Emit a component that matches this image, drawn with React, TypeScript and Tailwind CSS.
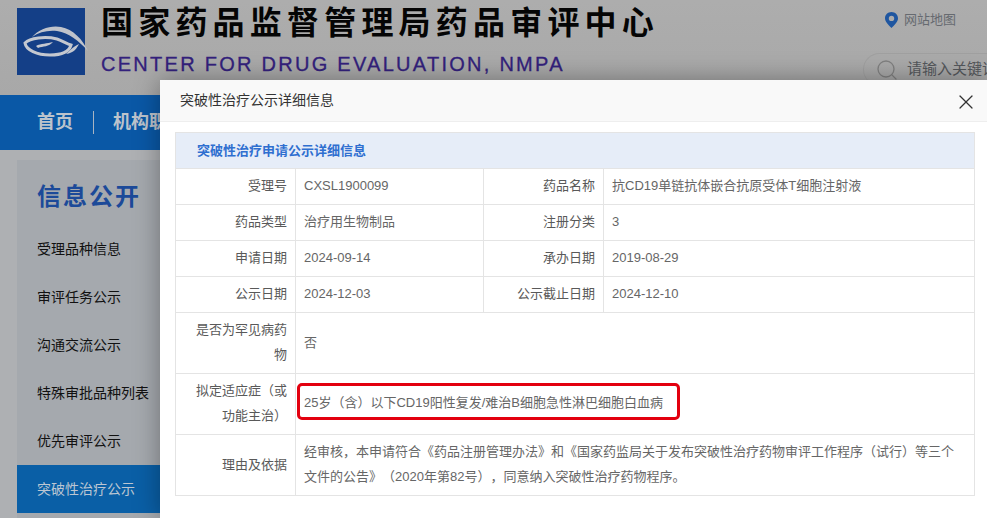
import { Search, X } from "lucide-react";

const cjk = "font-['Liberation_Sans','Noto_Sans_CJK_SC',sans-serif]";

const menu = ["受理品种信息", "审评任务公示", "沟通交流公示", "特殊审批品种列表", "优先审评公示"];

function Logo() {
  return (
    <div className="h-[67px] w-[68px] shrink-0 bg-[#143f87]">
      <svg viewBox="0 0 68 67" className="h-full w-full overflow-visible">
        <path d="M15 29 C22 21 34 17 44 19 C56 21 66 32 71 43 C62 33 52 25 40 23 C31 22 22 24 15 29 Z" fill="#bfc3cb" />
        <path
          d="M8 35 C13 30 28 28 40 31 C46 33 50 36 54 37 C52 44 44 47 33 47 C20 47 9 42 8 35 Z"
          fill="none"
          stroke="#c4c8d0"
          strokeWidth="3"
        />
        <path d="M49 46 C53 43 55 39 62 36 C60 40 57 45 49 46 Z" fill="#c4c8d0" />
        <path d="M19 38 C24 35 30 36 36 34 C32 39 26 38 21 40 Z" fill="#c4c8d0" />
      </svg>
    </div>
  );
}

function Pin() {
  return (
    <svg viewBox="0 0 13 16" className="h-4 w-[13px] shrink-0">
      <path
        fillRule="evenodd"
        d="M6.5 0 C10.1 0 13 2.8 13 6.3 C13 10 9 13.5 6.5 16 C4 13.5 0 10 0 6.3 C0 2.8 2.9 0 6.5 0 Z M6.5 3.7 A2.7 2.7 0 1 0 6.5 9.1 A2.7 2.7 0 1 0 6.5 3.7 Z"
        fill="#1f56a0"
      />
    </svg>
  );
}

function Label({ children }: { children: React.ReactNode }) {
  return (
    <div className="flex items-center justify-end border-r border-b border-[#e4e4e4] pr-2 pb-0.5 pl-2.5 text-right leading-[25px] text-[#595959]">
      <span>{children}</span>
    </div>
  );
}

function Value({ children, last, className }: { children: React.ReactNode; last?: boolean; className?: string }) {
  return (
    <div className={`flex items-center border-b border-[#e4e4e4] pr-2 pb-0.5 pl-2 leading-[25px] text-[#666666] ${last ? "" : "border-r"} ${className ?? ""}`}>
      <span>{children}</span>
    </div>
  );
}

export default function App() {
  return (
    <div className={`relative h-[518px] w-[987px] overflow-hidden bg-[#aeb0b3] text-[13px] [text-spacing-trim:space-all] ${cjk}`}>
      {/* page behind the dialog */}
      <header className="flex h-[95px] bg-gradient-to-b from-[#adadad] to-[#a8a8a8]">
        <div className="mt-2 ml-[17px]">
          <Logo />
        </div>
        <div className="ml-4 w-[600px]">
          <div className="h-[49px] pt-px text-[32px] leading-[44px] font-bold tracking-[5.2px] text-[#050505]">
            国家药品监督管理局药品审评中心
          </div>
          <div className="text-[20px] leading-[30px] font-normal tracking-[2.27px] whitespace-nowrap text-[#33217c] [-webkit-text-stroke:0.3px_#33217c]">
            CENTER FOR DRUG EVALUATION, NMPA
          </div>
        </div>
        <div className="ml-auto w-[102px]">
          <div className="mt-[11px] flex items-center gap-[6px] text-[13px] leading-[18px] text-[#666a70]">
            <Pin />
            网站地图
          </div>
          <div className="mt-[24px] ml-[-22px] flex h-[33px] w-[124px] items-center gap-2 overflow-hidden rounded-l-[17px] border border-r-0 border-[#a0a0a0] pl-[11px] text-[15px] whitespace-nowrap text-[#55585c]">
            <Search className="h-6 w-6 shrink-0 text-[#808080]" strokeWidth={1.3} />
            请输入关键词
          </div>
        </div>
      </header>

      <nav className="flex h-[55px] items-center bg-[#0a58a6] pl-[37px] text-[18px] font-bold text-[#bcc3cc]">
        <span>首页</span>
        <span className="mr-[19px] ml-5 h-[23px] w-px bg-[#a9b4c2]" />
        <span>机构职能</span>
      </nav>

      <div className="mt-[10px] ml-[17px] h-[368px] w-[160px] bg-[#a5a9ae]">
        <div className="pt-[21px] pl-5 text-[24px] leading-[32px] font-bold tracking-[2px] text-[#1c4a99]">信息公开</div>
        <ul className="mt-[12px] text-[14px] text-[#111111]">
          {menu.map((m) => (
            <li key={m} className="flex h-[48px] items-center pl-5">
              {m}
            </li>
          ))}
          <li className="flex h-[48px] items-center bg-[#0a5fa6] pl-5 text-[#bcc6d2]">突破性治疗公示</li>
        </ul>
      </div>

      {/* dialog */}
      <div className="absolute top-[80px] left-[160px] h-[438px] w-[827px] bg-white shadow-[0_0_24px_rgba(0,0,0,0.35)]">
        <div className="flex h-[42px] items-center justify-between border-b border-[#eeeeee] bg-[#f9f9f9] pr-[9px] pl-5 text-[14px] text-[#333333]">
          突破性治疗公示详细信息
          <X className="mt-0.5 h-6 w-6 text-[#333333]" strokeWidth={1.2} />
        </div>

        <div className="mx-[15px] mt-[10px] w-[800px] border-t border-r border-l border-[#e4e4e4]">
          <div className="flex h-[36px] items-center border-b border-[#e4e4e4] bg-[#e6edf8] pl-[21px] font-bold text-[#2f6fd0]">
            突破性治疗申请公示详细信息
          </div>
          <div className="grid grid-cols-[120px_188px_120px_370px] grid-rows-[36px_36px_36px_36px_61px_61px_61px]">
            <Label>受理号</Label>
            <Value>CXSL1900099</Value>
            <Label>药品名称</Label>
            <Value last>抗CD19单链抗体嵌合抗原受体T细胞注射液</Value>

            <Label>药品类型</Label>
            <Value>治疗用生物制品</Value>
            <Label>注册分类</Label>
            <Value last>3</Value>

            <Label>申请日期</Label>
            <Value>2024-09-14</Value>
            <Label>承办日期</Label>
            <Value last>2019-08-29</Value>

            <Label>公示日期</Label>
            <Value>2024-12-03</Value>
            <Label>公示截止日期</Label>
            <Value last>2024-12-10</Value>

            <Label>是否为罕见病药物</Label>
            <Value last className="col-span-3">否</Value>

            <Label>拟定适应症（或功能主治）</Label>
            <div className="relative col-span-3 flex">
              <Value last className="w-full !pb-1">25岁（含）以下CD19阳性复发/难治B细胞急性淋巴细胞白血病</Value>
              <div className="absolute top-[9px] left-px h-[37px] w-[383px] rounded-[5px] border-[3px] border-[#e3000f]" />
            </div>

            <Label>理由及依据</Label>
            <Value last className="col-span-3">
              经审核，本申请符合《药品注册管理办法》和《国家药监局关于发布突破性治疗药物审评工作程序（试行）等三个文件的公告》（2020年第82号），同意纳入突破性治疗药物程序。
            </Value>
          </div>
        </div>
      </div>
    </div>
  );
}
